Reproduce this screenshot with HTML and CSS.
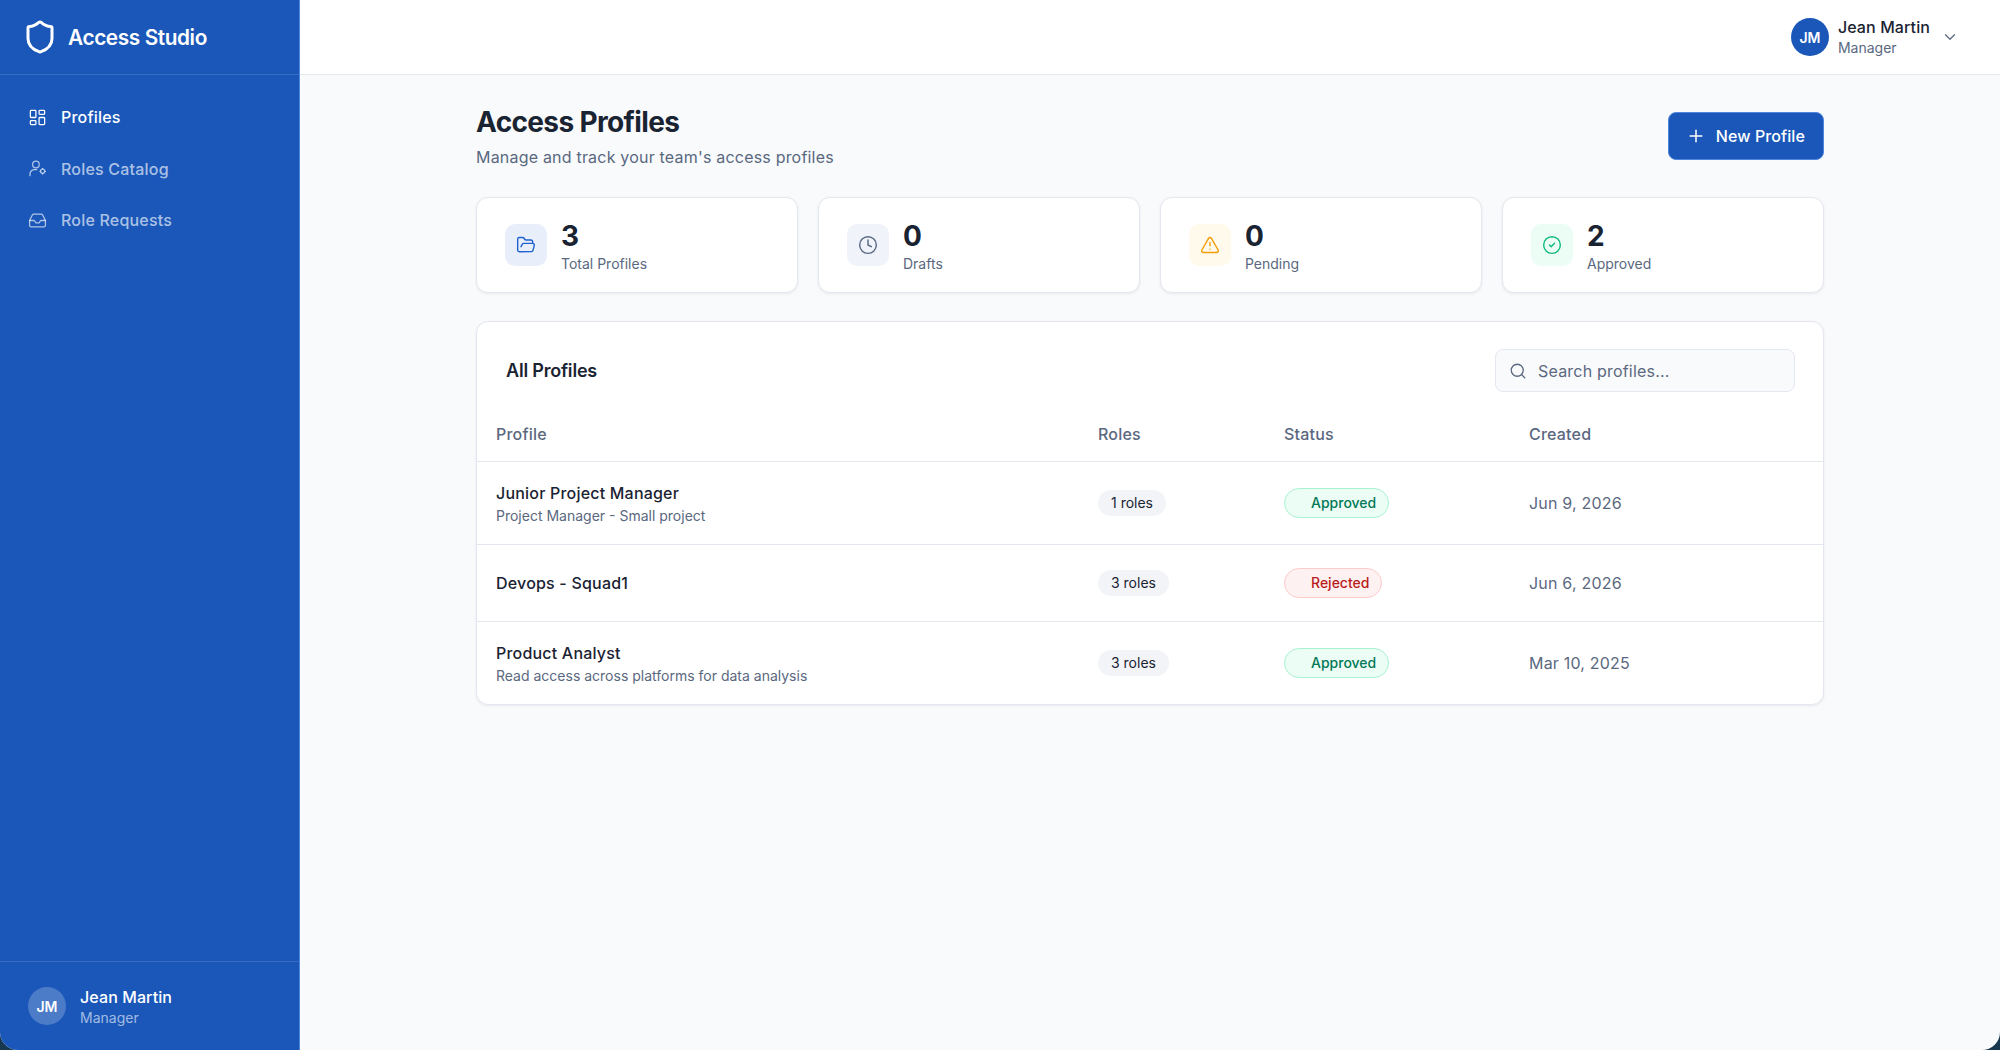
FILE: index.html
```html
<!DOCTYPE html>
<html lang="en">
<head>
    <meta charset="UTF-8">
    <meta name="viewport" content="width=device-width, initial-scale=1.0">
    <title>Access Studio</title>
    <link rel="stylesheet" href="styles.css">
</head>
<body>

<div class="app">

    <aside class="sidebar">
        <div class="brand">
            <svg class="icon brand-icon" viewBox="0 0 24 24"><path d="M20 13c0 5-3.5 7.5-7.66 8.95a1 1 0 0 1-.67-.01C7.5 20.5 4 18 4 13V6a1 1 0 0 1 1-1c2 0 4.5-1.2 6.24-2.72a1.17 1.17 0 0 1 1.52 0C14.51 3.81 17 5 19 5a1 1 0 0 1 1 1z"/></svg>
            <span class="brand-name">Access Studio</span>
        </div>

        <nav class="nav">
            <a class="nav-item active">
                <svg class="icon" viewBox="0 0 24 24"><rect x="3" y="3" width="7" height="9" rx="1"/><rect x="14" y="3" width="7" height="5" rx="1"/><rect x="14" y="12" width="7" height="9" rx="1"/><rect x="3" y="16" width="7" height="5" rx="1"/></svg>
                Profiles
            </a>
            <a class="nav-item">
                <svg class="icon" viewBox="0 0 24 24"><circle cx="10" cy="7" r="4.2"/><path d="M2.5 21v-2a5.5 5.5 0 0 1 5.5-5.5h3"/><circle cx="18.5" cy="15.5" r="2.6"/><path d="M18.5 12v.4M18.5 18.6v.4M15 15.5h.4M21.6 15.5h.4"/></svg>
                Roles Catalog
            </a>
            <a class="nav-item">
                <svg class="icon" viewBox="0 0 24 24"><path d="M22 12h-6l-2 3h-4l-2-3H2"/><path d="M5.45 5.11 2 12v6a2 2 0 0 0 2 2h16a2 2 0 0 0 2-2v-6l-3.45-6.89A2 2 0 0 0 16.76 4H7.24a2 2 0 0 0-1.79 1.11z"/></svg>
                Role Requests
            </a>
        </nav>

        <div class="side-user">
            <div class="avatar avatar-soft">JM</div>
            <div>
                <div class="side-user-name">Jean Martin</div>
                <div class="side-user-role">Manager</div>
            </div>
        </div>
    </aside>

    <div class="main">
        <header class="topbar">
            <div class="avatar">JM</div>
            <div class="top-user">
                <div class="top-user-name">Jean Martin</div>
                <div class="top-user-role">Manager</div>
            </div>
            <svg class="icon chevron" viewBox="0 0 24 24"><path d="m6 9 6 6 6-6"/></svg>
        </header>

        <main class="content">
            <div class="page-head">
                <div>
                    <h1>Access Profiles</h1>
                    <p>Manage and track your team's access profiles</p>
                </div>
                <button class="btn-new">
                    <svg class="icon" viewBox="0 0 24 24"><path d="M5 12h14M12 5v14"/></svg>
                    New Profile
                </button>
            </div>

            <div class="stats">
                <div class="stat">
                    <div class="stat-icon tint-blue">
                        <svg class="icon" viewBox="0 0 24 24"><path d="m6 14 1.5-2.9A2 2 0 0 1 9.24 10H20a2 2 0 0 1 1.94 2.5l-1.54 6a2 2 0 0 1-1.95 1.5H4a2 2 0 0 1-2-2V5a2 2 0 0 1 2-2h3.9a2 2 0 0 1 1.69.9l.81 1.2a2 2 0 0 0 1.67.9H18a2 2 0 0 1 2 2v2"/></svg>
                    </div>
                    <div class="stat-text">
                        <div class="stat-value">3</div>
                        <div class="stat-label">Total Profiles</div>
                    </div>
                </div>
                <div class="stat">
                    <div class="stat-icon tint-slate">
                        <svg class="icon" viewBox="0 0 24 24"><circle cx="12" cy="12" r="10"/><path d="M12 6v6l4 2"/></svg>
                    </div>
                    <div class="stat-text">
                        <div class="stat-value">0</div>
                        <div class="stat-label">Drafts</div>
                    </div>
                </div>
                <div class="stat">
                    <div class="stat-icon tint-amber">
                        <svg class="icon" viewBox="0 0 24 24"><path d="m21.73 18-8-14a2 2 0 0 0-3.48 0l-8 14A2 2 0 0 0 4 21h16a2 2 0 0 0 1.73-3"/><path d="M12 9v4M12 17h.01"/></svg>
                    </div>
                    <div class="stat-text">
                        <div class="stat-value">0</div>
                        <div class="stat-label">Pending</div>
                    </div>
                </div>
                <div class="stat">
                    <div class="stat-icon tint-green">
                        <svg class="icon" viewBox="0 0 24 24"><circle cx="12" cy="12" r="10"/><path d="m9 12 2 2 4-4"/></svg>
                    </div>
                    <div class="stat-text">
                        <div class="stat-value">2</div>
                        <div class="stat-label">Approved</div>
                    </div>
                </div>
            </div>

            <section class="panel">
                <div class="panel-head">
                    <h2>All Profiles</h2>
                    <div class="search">
                        <svg class="icon" viewBox="0 0 24 24"><path d="m21 21-4.34-4.34"/><circle cx="11" cy="11" r="8"/></svg>
                        <span>Search profiles...</span>
                    </div>
                </div>

                <table class="profiles">
                    <colgroup>
                        <col class="col-profile">
                        <col class="col-roles">
                        <col class="col-status">
                        <col class="col-created">
                    </colgroup>
                    <thead>
                        <tr>
                            <th>Profile</th>
                            <th>Roles</th>
                            <th>Status</th>
                            <th>Created</th>
                        </tr>
                    </thead>
                    <tbody>
                        <tr class="row-tall">
                            <td>
                                <div class="profile-name">Junior Project Manager</div>
                                <div class="profile-desc">Project Manager - Small project</div>
                            </td>
                            <td><span class="roles-pill">1 roles</span></td>
                            <td><span class="badge badge-ok">Approved</span></td>
                            <td class="date">Jun 9, 2026</td>
                        </tr>
                        <tr class="row-short">
                            <td><div class="profile-name">Devops - Squad1</div></td>
                            <td><span class="roles-pill">3 roles</span></td>
                            <td><span class="badge badge-no">Rejected</span></td>
                            <td class="date">Jun 6, 2026</td>
                        </tr>
                        <tr class="row-tall">
                            <td>
                                <div class="profile-name">Product Analyst</div>
                                <div class="profile-desc">Read access across platforms for data analysis</div>
                            </td>
                            <td><span class="roles-pill">3 roles</span></td>
                            <td><span class="badge badge-ok">Approved</span></td>
                            <td class="date">Mar 10, 2025</td>
                        </tr>
                    </tbody>
                </table>
            </section>
        </main>
    </div>

</div>

</body>
</html>
```
FILE: styles.css
```css
* {
    box-sizing: border-box;
}

body {
    margin: 0;
    height: 100vh;
    overflow: hidden;
    background: #17384f;
    font-family: Inter, "Liberation Sans", sans-serif;
    color: #1a2332;
}

.app {
    display: flex;
    height: 100vh;
    border-radius: 0 0 18px 18px;
    overflow: hidden;
    background: #f9fafc;
}

.icon {
    width: 20px;
    height: 20px;
    flex-shrink: 0;
    fill: none;
    stroke: currentColor;
    stroke-width: 2;
    stroke-linecap: round;
    stroke-linejoin: round;
}

/* Sidebar */
.sidebar {
    width: 300px;
    flex-shrink: 0;
    display: flex;
    flex-direction: column;
    background: #1a57b9;
    border-right: 1px solid #4f86e0;
    color: #fff;
}

.brand {
    display: flex;
    align-items: center;
    gap: 10px;
    height: 75px;
    padding-left: 22px;
    border-bottom: 1px solid rgba(255, 255, 255, 0.13);
}

.brand-icon {
    width: 36px;
    height: 36px;
}

.brand-name {
    font-size: 20.8px;
    font-weight: 600;
    letter-spacing: -0.4px;
}

.nav {
    flex: 1;
    display: flex;
    flex-direction: column;
    gap: 3.5px;
    padding: 18px 0 0 28px;
}

.nav-item {
    display: flex;
    align-items: center;
    gap: 14px;
    height: 48px;
    font-size: 16px;
    font-weight: 500;
    letter-spacing: 0.2px;
    color: rgba(255, 255, 255, 0.65);
}

.nav-item .icon {
    width: 19px;
    height: 19px;
    stroke-width: 1.6;
}

.nav-item.active {
    color: #fff;
}

.side-user {
    display: flex;
    align-items: center;
    gap: 14px;
    height: 89px;
    padding: 2px 0 0 28px;
    border-top: 1px solid rgba(255, 255, 255, 0.13);
}

.side-user-name {
    font-size: 16px;
    font-weight: 500;
    line-height: 20px;
    letter-spacing: 0.1px;
}

.side-user-role {
    margin-top: 1px;
    font-size: 14px;
    line-height: 20px;
    color: rgba(255, 255, 255, 0.6);
}

.avatar {
    width: 38px;
    height: 38px;
    border-radius: 50%;
    display: flex;
    align-items: center;
    justify-content: center;
    background: #1a57b9;
    color: #fff;
    font-size: 14px;
    font-weight: 600;
}

.avatar-soft {
    background: rgba(255, 255, 255, 0.22);
    margin-top: -2px;
}

/* Top bar */
.main {
    flex: 1;
    min-width: 0;
    display: flex;
    flex-direction: column;
}

.topbar {
    display: flex;
    align-items: center;
    justify-content: flex-end;
    gap: 9px;
    height: 75px;
    padding-right: 41px;
    background: #fff;
    border-bottom: 1px solid #e4e7ef;
}

.top-user {
    margin-right: 2px;
    padding-top: 1px;
}

.top-user-name {
    font-size: 16px;
    font-weight: 500;
    line-height: 20px;
    letter-spacing: 0.1px;
}

.top-user-role {
    margin-top: 1px;
    font-size: 14px;
    line-height: 20px;
    color: #5a6880;
}

.chevron {
    width: 18px;
    height: 18px;
    color: #5a6880;
    stroke-width: 1.6;
}

/* Content */
.content {
    width: 1348px;
    margin: 0 auto;
    padding-top: 30px;
}

.page-head {
    display: flex;
    justify-content: space-between;
    align-items: flex-start;
    margin-bottom: 28px;
}

.page-head h1 {
    margin: 0 0 6px;
    font-size: 28px;
    line-height: 34px;
    font-weight: 700;
    letter-spacing: -0.63px;
}

.page-head p {
    margin: 0;
    font-size: 16px;
    line-height: 24px;
    letter-spacing: 0.2px;
    color: #5a6880;
}

.btn-new {
    display: flex;
    align-items: center;
    gap: 10px;
    height: 48px;
    margin-top: 7px;
    padding: 0 18px 0 17px;
    border: 1px solid #4f86e0;
    border-radius: 8px;
    background: #1a57b9;
    color: #fff;
    font-family: inherit;
    font-size: 16px;
    font-weight: 500;
    letter-spacing: 0.1px;
}

.btn-new .icon {
    stroke-width: 1.8;
}

.stats {
    display: grid;
    grid-template-columns: repeat(4, 1fr);
    gap: 20px;
    margin-bottom: 28px;
}

.stat,
.panel {
    background: #fff;
    border: 1px solid #e4e7ef;
    border-radius: 12px;
    box-shadow: 0 1px 3px rgba(26, 35, 50, 0.08);
}

.stat {
    display: flex;
    align-items: center;
    gap: 14px;
    height: 96px;
    padding-left: 28px;
}

.stat-icon {
    width: 42px;
    height: 42px;
    border-radius: 10px;
    display: flex;
    align-items: center;
    justify-content: center;
}

.stat-icon .icon {
    stroke-width: 1.7;
}

.tint-blue { background: #e9effa; color: #1f62d0; }
.tint-slate { background: #f0f3f9; color: #5a6880; }
.tint-amber { background: #fffaeb; color: #f59e0b; }
.tint-green { background: #ebfdf5; color: #10b981; }

.stat-text {
    padding-top: 2px;
}

.stat-value {
    font-size: 28px;
    line-height: 34px;
    font-weight: 700;
}

.stat-label {
    margin-top: 1px;
    font-size: 14px;
    line-height: 20px;
    color: #5a6880;
}

/* Profiles table */
.panel {
    overflow: hidden;
}

.panel-head {
    display: flex;
    align-items: center;
    justify-content: space-between;
    height: 86px;
    padding: 11px 28px 0 29px;
}

.panel-head h2 {
    margin: 0;
    font-size: 18px;
    font-weight: 600;
    letter-spacing: -0.2px;
}

.search {
    display: flex;
    align-items: center;
    gap: 11px;
    width: 300px;
    height: 43px;
    padding-left: 13px;
    background: #f9fafc;
    border: 1px solid #e4e7ef;
    border-radius: 8px;
    font-size: 16px;
    letter-spacing: 0.2px;
    color: #5a6880;
}

.search .icon {
    width: 18px;
    height: 18px;
    stroke-width: 1.7;
}

.profiles {
    width: 100%;
    border-collapse: collapse;
    table-layout: fixed;
}

.col-profile { width: 602px; }
.col-roles { width: 186px; }
.col-status { width: 245px; }

.profiles th {
    height: 53px;
    padding: 0 19px;
    text-align: left;
    font-size: 16px;
    font-weight: 500;
    letter-spacing: 0.2px;
    color: #5a6880;
}

.profiles td {
    padding: 0 19px;
    border-top: 1px solid #e4e7ef;
}

.row-tall { height: 83px; }
.row-short { height: 77px; }

.profile-name {
    font-size: 16px;
    font-weight: 500;
    line-height: 22px;
    letter-spacing: 0.2px;
}

.profile-desc {
    margin-top: 2px;
    font-size: 14px;
    line-height: 20px;
    color: #5a6880;
}

.row-tall .profile-name {
    padding-top: 2px;
}

.roles-pill {
    display: inline-block;
    padding: 0 13px;
    height: 26px;
    line-height: 26px;
    border-radius: 13px;
    background: #f3f4f7;
    font-size: 14px;
}

.badge {
    display: inline-block;
    height: 30px;
    line-height: 28px;
    padding: 0 12px 0 26px;
    border: 1px solid;
    border-radius: 15px;
    font-size: 14px;
    font-weight: 500;
}

.badge-ok {
    background: #ebfdf5;
    border-color: #a7f3d0;
    color: #047857;
}

.badge-no {
    background: #fef1f1;
    border-color: #fecaca;
    color: #b91c1c;
}

.date {
    font-size: 16px;
    letter-spacing: 0.2px;
    color: #5a6880;
}
```
